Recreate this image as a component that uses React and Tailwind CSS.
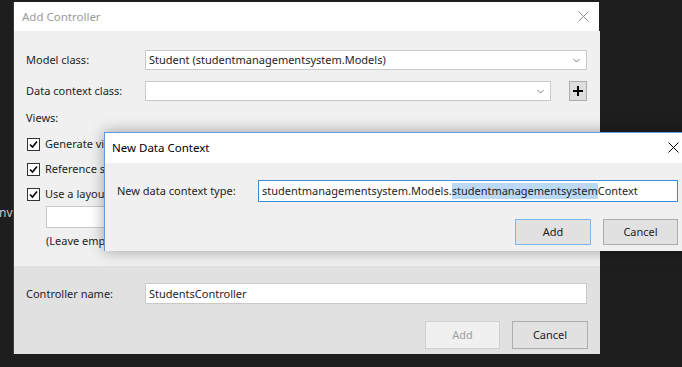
import React from "react";

const font = { fontFamily: '"Noto Sans", "Segoe UI", sans-serif' };

function XIcon({ color, size = 11 }) {
  return (
    <svg width={size} height={size} viewBox="0 0 11 11">
      <path d="M0.5 0.5 L10.5 10.5 M10.5 0.5 L0.5 10.5" stroke={color} strokeWidth="1" fill="none" />
    </svg>
  );
}

function Chevron() {
  return (
    <svg width="7" height="5" viewBox="0 0 7 5">
      <path d="M0.5 1 L3.5 4 L6.5 1" stroke="#808080" strokeWidth="1" fill="none" />
    </svg>
  );
}

function Checkbox() {
  return (
    <div className="shrink-0 w-[13px] h-[13px] border border-[#333333] bg-white flex items-center justify-center">
      <svg width="9" height="9" viewBox="0 0 9 9">
        <path d="M1 4.5 L3.5 7 L8 1.5" stroke="#000" strokeWidth="1.6" fill="none" />
      </svg>
    </div>
  );
}

function CheckRow({ label, className }) {
  return (
    <div className={`pl-[13px] h-[16px] flex items-center gap-[5px] ${className}`}>
      <Checkbox />
      <span className="w-[59px] overflow-hidden whitespace-nowrap">{label}</span>
    </div>
  );
}

export default function App() {
  return (
    <div className="relative w-[682px] h-[367px] overflow-hidden bg-[#1e1e1e] text-[11px] leading-[16px]" style={font}>
      {/* faint text behind */}
      <div className="absolute left-[-1px] top-[205px] text-[12px] text-[#c8c8c8]">nv</div>

      {/* Main dialog */}
      <div className="ml-[13px] mt-[2px] w-[587px] h-[352px] flex flex-col border-l border-[#3a3a3a]">
        <div className="h-[29px] w-[585px] bg-white flex items-center justify-between pl-[8px] pr-[10px]">
          <span className="text-[#9a9a9a] text-[11.5px]">Add Controller</span>
          <XIcon color="#8a8a8a" />
        </div>
        <div className="bg-[#f0f0f0] h-[235px] pt-[19px] text-[#1e1e1e]">
          <div className="flex items-center h-[20px]">
            <div className="w-[131px] pl-[12px]">Model class:</div>
            <div className="w-[442px] h-[20px] bg-white border border-[#c9c9c9] flex items-center justify-between pl-[3px] pr-[6px]">
              <span>Student (studentmanagementsystem.Models)</span>
              <Chevron />
            </div>
          </div>
          <div className="flex items-center h-[20px] mt-[11px]">
            <div className="w-[131px] pl-[12px]">Data context class:</div>
            <div className="w-[406px] h-[20px] bg-white border border-[#c9c9c9] flex items-center justify-end pr-[6px]">
              <Chevron />
            </div>
            <div className="ml-[18px] w-[18px] h-[20px] bg-[#dedede] border border-[#adadad] flex items-center justify-center">
              <svg width="10" height="10" viewBox="0 0 10 10">
                <path d="M5 0 V10 M0 5 H10" stroke="#000" strokeWidth="2" />
              </svg>
            </div>
          </div>
          <div className="mt-[9px] pl-[12px] h-[16px]">Views:</div>
          <CheckRow label="Generate views" className="mt-[10px]" />
          <CheckRow label="Reference script libraries" className="mt-[9px]" />
          <CheckRow label="Use a layout page:" className="mt-[9px]" />
          <div className="mt-[4px] ml-[32px] w-[58px] h-[22px] bg-white border border-[#c9c9c9] border-r-0"></div>
          <div className="mt-[5px] ml-[32px] w-[58px] h-[16px] overflow-hidden whitespace-nowrap">(Leave empty if it is set in a Razor _viewstart file)</div>
        </div>
        <div className="bg-[#e1e1e1] flex-1 pt-[17px] text-[#1e1e1e]">
          <div className="flex items-center h-[21px]">
            <div className="w-[131px] pl-[12px]">Controller name:</div>
            <div className="w-[442px] h-[21px] bg-white border border-[#c9c9c9] flex items-center pl-[3px]">
              StudentsController
            </div>
          </div>
          <div className="mt-[17px] flex justify-end pr-[12px] gap-[12px]">
            <div className="w-[75px] h-[28px] bg-[#f0f0f0] border border-[#d0d0d0] text-[#a0a0a0] flex items-center justify-center">Add</div>
            <div className="w-[76px] h-[28px] bg-[#e1e1e1] border border-[#adadad] flex items-center justify-center">Cancel</div>
          </div>
        </div>
      </div>

      {/* New Data Context dialog */}
      <div className="absolute left-[104px] top-[132px] w-[600px] h-[119px] border-l border-t border-[#5d9be0] shadow-[0_0_14px_rgba(0,0,0,0.35)] flex flex-col">
        <div className="h-[30px] bg-white flex items-center pl-[7px] text-black">
          <span className="text-[11.5px]">New Data Context</span>
          <div className="absolute left-[563px] top-[9px]">
            <XIcon color="#000" />
          </div>
        </div>
        <div className="flex-1 bg-[#f0f0f0] pt-[17px] text-[#1e1e1e]">
          <div className="flex items-center h-[22px]">
            <div className="w-[153px] pl-[12px]">New data context type:</div>
            <div className="w-[420px] h-[22px] bg-white border border-[#3c8fdd] flex items-center pl-[3px] whitespace-nowrap">
              <span>studentmanagementsystem.Models.</span>
              <span className="bg-[#b9d9f5]">studentmanagementsystem</span>
              <span>Context</span>
            </div>
          </div>
          <div className="mt-[17px] flex items-center h-[26px]">
            <div className="ml-[410px] w-[76px] h-[26px] bg-[#e1e1e1] border border-[#7eb4ea] flex items-center justify-center">Add</div>
            <div className="ml-[12px] w-[75px] h-[26px] bg-[#e1e1e1] border border-[#adadad] flex items-center justify-center">Cancel</div>
          </div>
        </div>
      </div>
    </div>
  );
}
